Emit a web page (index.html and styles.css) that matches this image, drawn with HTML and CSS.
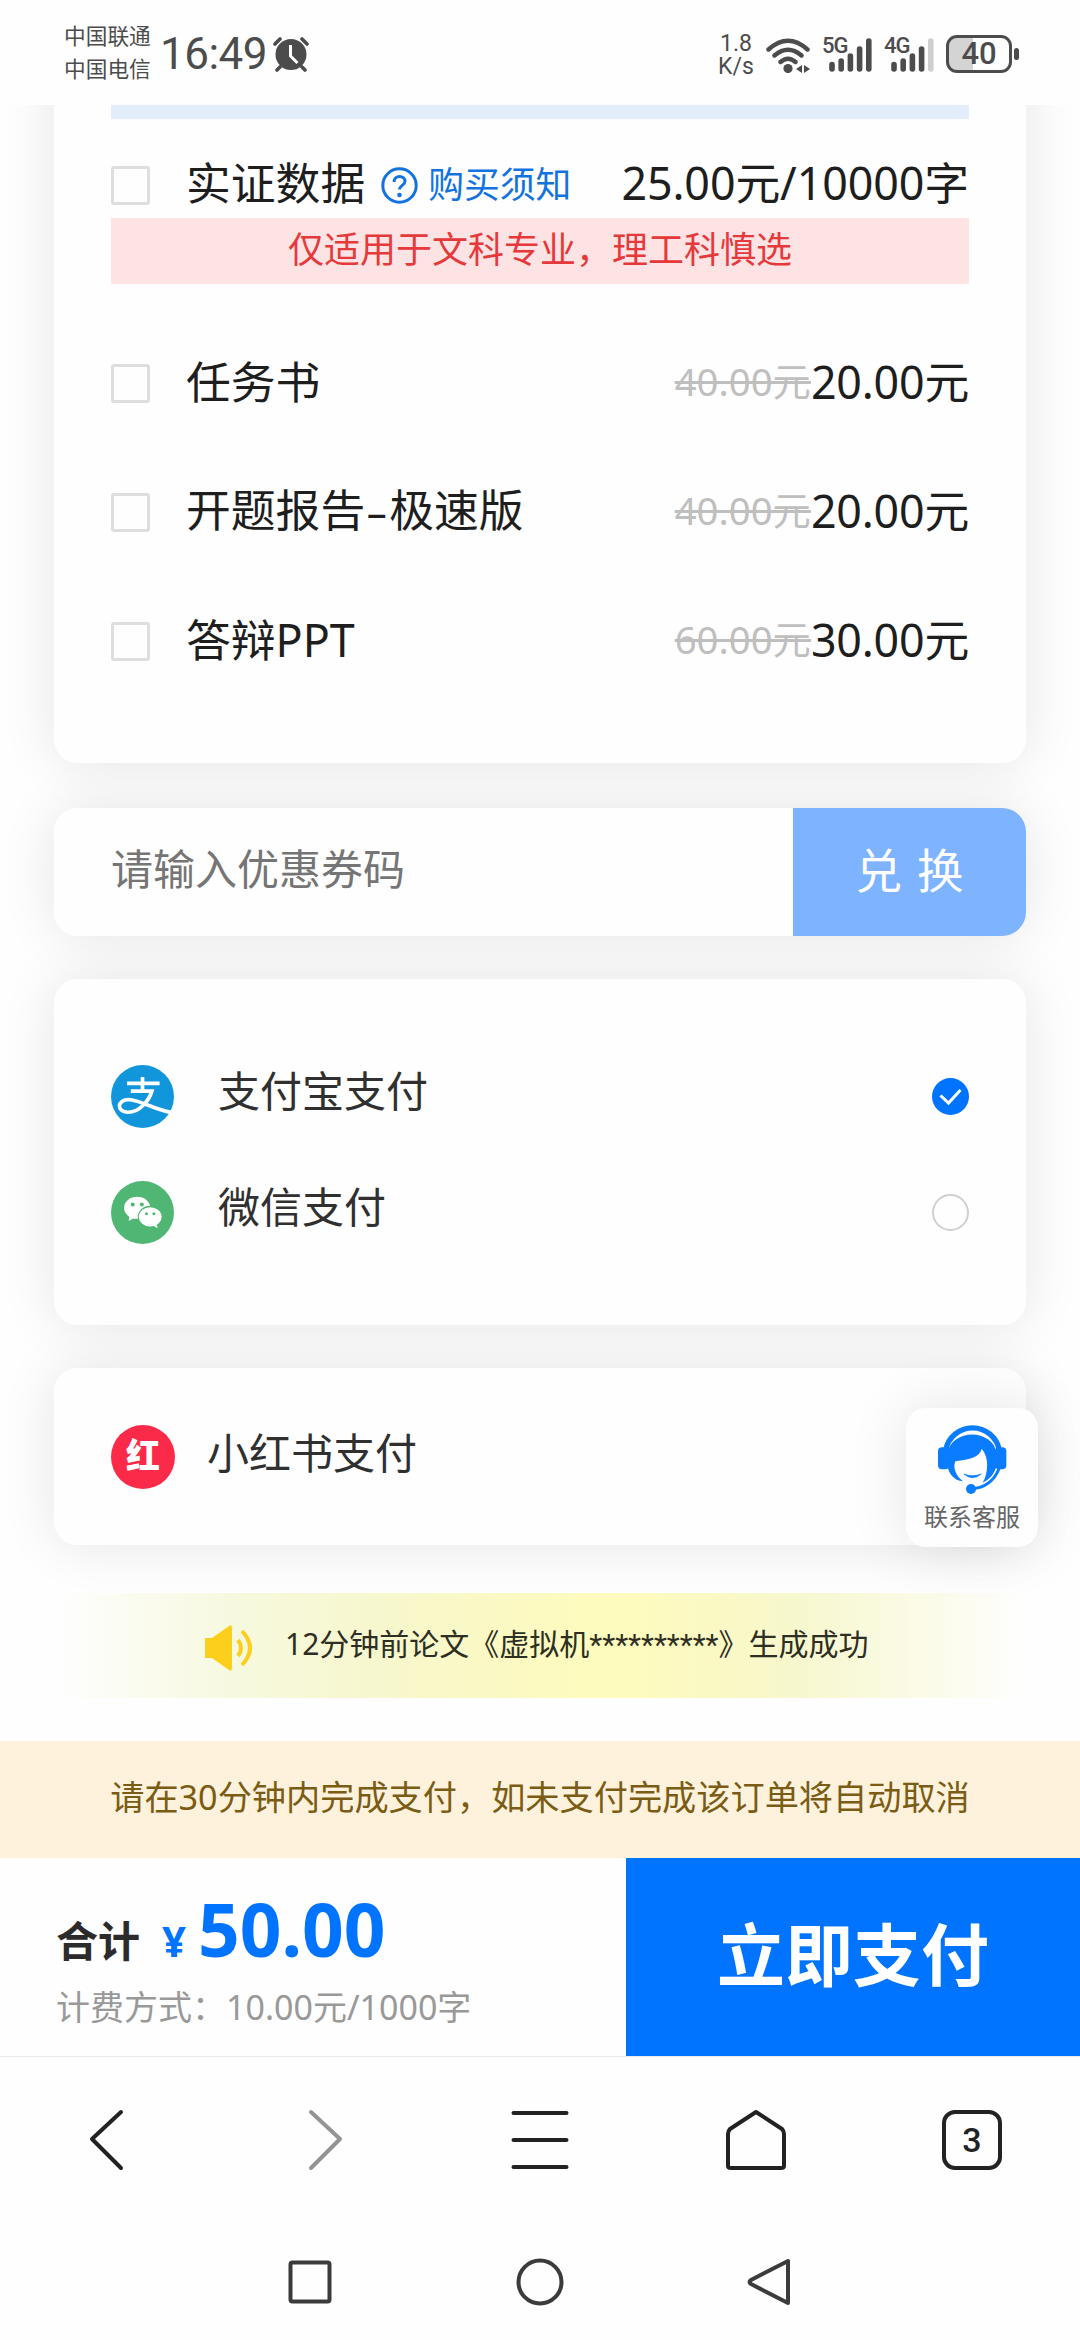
FILE: index.html
```html
<!DOCTYPE html>
<html lang="zh-CN">
<head>
<meta charset="utf-8">
<title>订单支付</title>
<link rel="stylesheet" href="styles.css">
</head>
<body>
<header class="status">
  <div class="carriers"><span>中国联通</span><span>中国电信</span></div>
  <span class="clock">16:49</span>
  <svg class="alarm" width="36" height="36" viewBox="0 0 36 36"><circle cx="18" cy="18.5" r="15.5" fill="#4c4c4c"/><path d="M2 8l5-5M34 8l-5-5M7 31l-3 3M29 31l3 3" stroke="#4c4c4c" stroke-width="3.6" stroke-linecap="round"/><path d="M17.500 9v11l7 7" fill="none" stroke="#fff" stroke-width="3"/></svg>
  <div class="status-right">
    <div class="speed"><span>1.8</span><span>K/s</span></div>
    <svg class="wifi" width="44" height="36" viewBox="0 0 44 36" fill="none" stroke="#4c4c4c" stroke-width="4.400" stroke-linecap="round"><path d="M2.500 12.500Q22-5 41.500 12.500M8.500 18.500Q22 7 35.500 18.500M14.500 25Q22 18.500 29.500 25"/><circle cx="22" cy="31.500" r="4.600" fill="#4c4c4c" stroke="none"/><path d="M36 28v8l-6-4zM38 28v8l6-4z" fill="#4c4c4c" stroke="none"/></svg>
    <div class="signal"><b>5G</b><svg width="43" height="36" viewBox="0 0 43 36" stroke="#4c4c4c" stroke-width="5.600" stroke-linecap="round"><path d="M3 27.500v4.500M12.200 24v8M21.400 19v13M30.600 12v20M39.800 4v28"/></svg></div>
    <div class="signal second"><b>4G</b><svg width="43" height="36" viewBox="0 0 43 36" stroke="#4c4c4c" stroke-width="5.600" stroke-linecap="round"><path d="M3 27.500v4.500M12.200 24v8M21.400 19v13M30.600 12v20"/><path d="M39.800 4v28" stroke="#cecece"/></svg></div>
    <div class="battery">40</div><i class="nub"></i>
  </div>
</header>

<main class="page">
  <section class="card extras">
    <div class="strip"></div>
    <div class="row first">
      <i class="box"></i><span class="name">实证数据</span>
      <svg class="help" width="37" height="37" viewBox="0 0 37 37" fill="none" stroke="#1273e0"><circle cx="18.500" cy="18.500" r="16.700" stroke-width="3"/><path d="M13 15c0-7.500 11-7 11-.8 0 4-5.500 4.300-5.500 8.300" stroke-width="3"/><circle cx="18.500" cy="28" r="2.300" fill="#1273e0" stroke="none"/></svg>
      <span class="notice-link">购买须知</span>
      <span class="price wide">25.00元/10000字</span>
    </div>
    <div class="warn">仅适用于文科专业，理工科慎选</div>
    <div class="rows">
      <div class="row"><i class="box"></i><span class="name">任务书</span><del>40.00元</del><span class="price">20.00元</span></div>
      <div class="row"><i class="box"></i><span class="name">开题报告<span class="dash">–</span>极速版</span><del>40.00元</del><span class="price">20.00元</span></div>
      <div class="row"><i class="box"></i><span class="name">答辩PPT</span><del>60.00元</del><span class="price">30.00元</span></div>
    </div>
  </section>

  <section class="card coupon">
    <span class="placeholder">请输入优惠券码</span>
    <div class="redeem">兑 换</div>
  </section>

  <section class="card pay">
    <div class="method">
      <svg width="63" height="63" viewBox="93 75 188 188"><circle cx="187" cy="169" r="94" fill="#1296db"/><path d="M187 111v40M141 130h97M152 153h63C207 180 178 217 143 216C108 215 111 178 146 178C178 179 222 208 276 217" fill="none" stroke="#fff" stroke-width="11"/></svg>
      <span>支付宝支付</span>
      <svg class="radio" width="37" height="37" viewBox="0 0 37 37"><circle cx="18.500" cy="18.500" r="18.500" fill="#0073ff"/><path d="M8.500 17.500l8 7.500 12-13" fill="none" stroke="#fff" stroke-width="3"/></svg>
    </div>
    <div class="method">
      <svg width="63" height="63" viewBox="93 423 188 188"><circle cx="187" cy="517" r="94" fill="#50b674"/><g fill="#fff"><ellipse cx="171" cy="503" rx="39" ry="33"/><path d="M148 526l-2 16 18-10z"/><ellipse cx="210" cy="530" rx="37" ry="33" fill="#50b674"/><ellipse cx="210" cy="530" rx="34" ry="29"/><path d="M218 556l14 8-3-18z"/></g><g fill="#50b674"><circle cx="158" cy="493" r="6"/><circle cx="185" cy="493" r="6"/><circle cx="199" cy="521" r="4.500"/><circle cx="221" cy="521" r="4.500"/></g></svg>
      <span>微信支付</span>
      <i class="radio empty"></i>
    </div>
  </section>

  <section class="card red">
    <div class="redbook">红</div><span>小红书支付</span>
  </section>

  <div class="ticker">
    <svg width="48" height="48" viewBox="0 0 48 48"><path d="M0 14h7L24 2Q27 0 27 4v40q0 4-3 2L7 34H0z" fill="#fdcf1d"/><path d="M33 16q6 8 0 16M37 7q16 17 0 34" fill="none" stroke="#fdcf1d" stroke-width="4"/></svg>
    <span>12分钟前论文《虚拟机<span class="stars">**********</span>》生成成功</span>
  </div>
</main>

<aside class="service">
  <svg width="72" height="74" viewBox="468 246 216 222">
    <path d="M497 330A82 82 0 0 1 658 330" fill="none" stroke="#0a7cff" stroke-width="16"/>
    <rect x="474" y="322" width="34" height="66" rx="12" fill="#0a7cff"/><rect x="645" y="322" width="34" height="66" rx="12" fill="#0a7cff"/>
    <path d="M502 340C515 265 638 265 650 340V375C645 400 630 418 608 428C625 400 628 350 605 326C599 352 570 357 526 364C517 385 530 410 549 424C522 422 505 400 502 375z" fill="#0a7cff"/>
    <path d="M552 402Q577 424 604 402Q577 412 552 402z" fill="#0a7cff" stroke="#0a7cff" stroke-width="2"/>
    <path d="M658 384Q635 443 574 446" fill="none" stroke="#0a7cff" stroke-width="9"/><circle cx="573" cy="447" r="15" fill="#0a7cff"/>
  </svg>
  <span>联系客服</span>
</aside>

<div class="deadline">请在30分钟内完成支付，如未支付完成该订单将自动取消</div>
<div class="checkout">
  <div class="sum">
    <div class="total"><b class="label">合计</b><b class="yen">¥</b><b class="amount">50.00</b></div>
    <div class="mode">计费方式：10.00元/1000字</div>
  </div>
  <div class="submit">立即支付</div>
</div>
<nav class="browser">
  <div><svg width="64" height="64" viewBox="0 0 64 64"><path d="M45 4L16 31 45 60" stroke="#222"/></svg></div>
  <div><svg width="64" height="64" viewBox="0 0 64 64"><path d="M19 4L48 31 19 60" stroke="#949494"/></svg></div>
  <div><svg width="64" height="64" viewBox="0 0 64 64"><path d="M5.500 5h53M5.500 32h53M5.500 59h53" stroke="#222"/></svg></div>
  <div><svg width="64" height="64" viewBox="0 0 64 64"><path d="M32 4L58 21Q60 23 60 26V58Q60 60 57 60H7Q4 60 4 58V26Q4 23 6 21z" stroke="#222"/></svg></div>
  <div><span class="tabs">3</span></div>
</nav>
<nav class="system">
  <svg width="50" height="50" viewBox="0 0 50 50"><rect x="5.500" y="5.500" width="39" height="39" rx="2"/></svg>
  <svg width="50" height="50" viewBox="0 0 50 50"><circle cx="25" cy="25" r="21.500"/></svg>
  <svg width="50" height="50" viewBox="0 0 50 50"><path d="M43 4V46L6 27Q3 25 6 23z"/></svg>
</nav>
</body>
</html>
```
FILE: styles.css
```css
* { box-sizing: border-box; }
body { margin: 0; width: 1080px; height: 2340px; overflow: hidden; position: relative; display: flex; flex-direction: column; background: #fefefe; color: #1e1e1e; font-family: "Noto Sans", "Noto Sans CJK SC", sans-serif; }
svg { display: block; flex: none; }
span, del { white-space: nowrap; }

.status { height: 105px; flex: none; display: flex; align-items: flex-start; padding-left: 64px; background: #fefefe; color: #4c4c4c; position: relative; z-index: 1; }
.carriers { display: flex; flex-direction: column; width: 96px; font-size: 21.7px; line-height: 33px; padding-top: 19px; }
.clock { font-family: Roboto, sans-serif; font-size: 44px; line-height: 50px; width: 113px; margin-top: 29px; letter-spacing: -0.5px; }
.alarm { margin-top: 36px; }
.status-right { margin-left: auto; padding-right: 61px; display: flex; align-items: flex-start; }
.speed { display: flex; flex-direction: column; align-items: center; font-family: Roboto, sans-serif; font-size: 23px; line-height: 23px; width: 36px; margin: 32px 12px 0 0; }
.wifi { margin: 37px 12px 0 0; }
.signal { position: relative; width: 50px; height: 36px; margin: 37px 12px 0 0; padding-left: 7px; }
.signal b { position: absolute; left: 0; top: -2px; font: 500 22px/22px Roboto, sans-serif; letter-spacing: -1px; }
.battery { width: 66px; height: 38px; margin: 35px 2px 0 0; border: 3px solid #4c4c4c; border-radius: 11px; background: linear-gradient(90deg, #d4d4d4 40%, #fefefe 40%); text-align: center; font: 500 31px/32px Roboto, sans-serif; }
.nub { width: 5px; height: 12px; margin-top: 48px; border-radius: 3px; background: #4c4c4c; }

.page { height: 1636px; flex: none; padding: 0 54px; display: flex; flex-direction: column; isolation: isolate; position: relative; }
.card { position: relative; background: #fefefe; border-radius: 24px; flex: none; }
.card::before { content: ""; position: absolute; inset: 0; z-index: -1; border-radius: 24px; box-shadow: 0 0 54px rgba(0, 0, 0, 0.1); }
.extras { height: 658px; padding: 0 57px; border-radius: 0 0 24px 24px; }
.extras::before { top: -60px; }
.strip { height: 14px; background: #e2eefc; }
.row { height: 129px; display: flex; align-items: center; }
.row.first { height: 99px; padding-top: 33px; }
.box { width: 39px; height: 39px; margin-right: 36px; border: 3px solid #dedede; border-radius: 3px; flex: none; }
.name, .price { font-size: 44.8px; line-height: 60px; padding-bottom: 4px; }
.name { margin-right: auto; }
.first .name { margin-right: 16px; }
.dash { display: inline-block; width: 24px; text-align: center; text-indent: -1px; font-size: 40px; }
.help { margin-right: 10px; }
.notice-link { color: #1273e0; font-size: 35.8px; line-height: 50px; padding-bottom: 3px; }
.price { letter-spacing: -0.2px; }
.price.wide { margin-left: auto; letter-spacing: -0.1px; }
del { color: #bfbfbf; font-size: 38.3px; line-height: 50px; padding-bottom: 6px; text-decoration-thickness: 3px; }
.warn { height: 66px; background: #fde3e4; color: #e5393b; font-size: 36px; line-height: 63px; text-align: center; }
.rows { padding-top: 35px; }

.coupon { margin-top: 45px; height: 128px; display: flex; align-items: center; justify-content: space-between; padding-left: 57px; }
.placeholder { color: #757575; font-size: 42px; line-height: 60px; padding-bottom: 7px; }
.redeem { width: 233px; height: 128px; border-radius: 0 24px 24px 0; background: #7eb3ff; color: #fff; font-size: 46.5px; line-height: 124px; text-align: center; word-spacing: 3px; }

.pay { margin-top: 43px; height: 346px; padding: 86px 57px 0; display: flex; flex-direction: column; gap: 53px; color: #303030; font-size: 42px; line-height: 54px; }
.method { height: 63px; display: flex; align-items: center; }
.method span { margin-left: 44px; padding-bottom: 12px; }
.radio { margin-left: auto; }
.empty { width: 37px; height: 37px; border: 2px solid #d0d0d0; border-radius: 50%; }
.red { margin-top: 43px; height: 177px; padding: 0 57px; display: flex; align-items: center; gap: 32px; color: #303030; font-size: 42px; line-height: 54px; }
.red > span { padding-bottom: 8px; }
.redbook { width: 64px; height: 64px; border-radius: 50%; background: #fc2a49; color: #fff; text-align: center; font: 900 34px/58px "Noto Sans CJK SC", sans-serif; }

.ticker { margin-top: 48px; height: 105px; display: flex; align-items: center; padding-left: 151px; background: linear-gradient(90deg, #fefefe 0%, #f7f9df 18%, #f7f7cd 34%, #fdfbbd 55%, #fdfbbd 60%, #f7f7cd 76%, #fbfbe9 90%, #fefefe 100%); font-size: 30px; line-height: 40px; color: #2e2e22; }
.ticker > svg { margin: 5px 32px 0 0; }
.ticker > span { padding-bottom: 2px; }
.stars { font-family: Roboto, sans-serif; letter-spacing: 0; }

.service { position: absolute; left: 906px; top: 1408px; width: 132px; height: 139px; border-radius: 20px; background: #fefefe; box-shadow: 0 0 60px rgba(0, 0, 0, 0.1); display: flex; flex-direction: column; align-items: center; padding-top: 14px; z-index: 2; color: #666; font-size: 24px; line-height: 34px; }
.service span { margin-top: 4px; }

.deadline { height: 117px; flex: none; background: #fff2dc; color: #7a5c14; font-size: 34.2px; line-height: 111px; text-align: center; white-space: nowrap; }
.checkout { height: 198px; flex: none; display: flex; justify-content: space-between; }
.sum { padding: 26px 0 0 56px; }
.total { height: 90px; display: flex; align-items: baseline; line-height: 90px; color: #0073ff; }
.label { font-size: 42px; color: #2b2b2b; }
.yen { font-size: 42px; margin: 0 12px 0 22px; }
.amount { font-size: 73px; }
.mode { font-size: 34px; line-height: 46px; margin-top: 10px; color: #999; white-space: nowrap; }
.submit { width: 454px; background: #0073ff; color: #fff; font-size: 68px; font-weight: 700; line-height: 194px; text-align: center; }

.browser { height: 167px; flex: none; display: grid; grid-template-columns: repeat(5, 216px); border-top: 1px solid #e7e9eb; }
.browser div { display: flex; align-items: center; justify-content: center; }
.browser path { fill: none; stroke-width: 4; stroke-linecap: round; stroke-linejoin: round; }
.tabs { width: 60px; height: 60px; border: 4px solid #222; border-radius: 13px; text-align: center; color: #222; font: 500 34px/52px Roboto, sans-serif; }
.system { height: 117px; flex: none; display: flex; justify-content: center; gap: 180px; padding-top: 34px; }
.system svg { fill: none; stroke: #3b3b3b; stroke-width: 4; stroke-linejoin: round; }
```
